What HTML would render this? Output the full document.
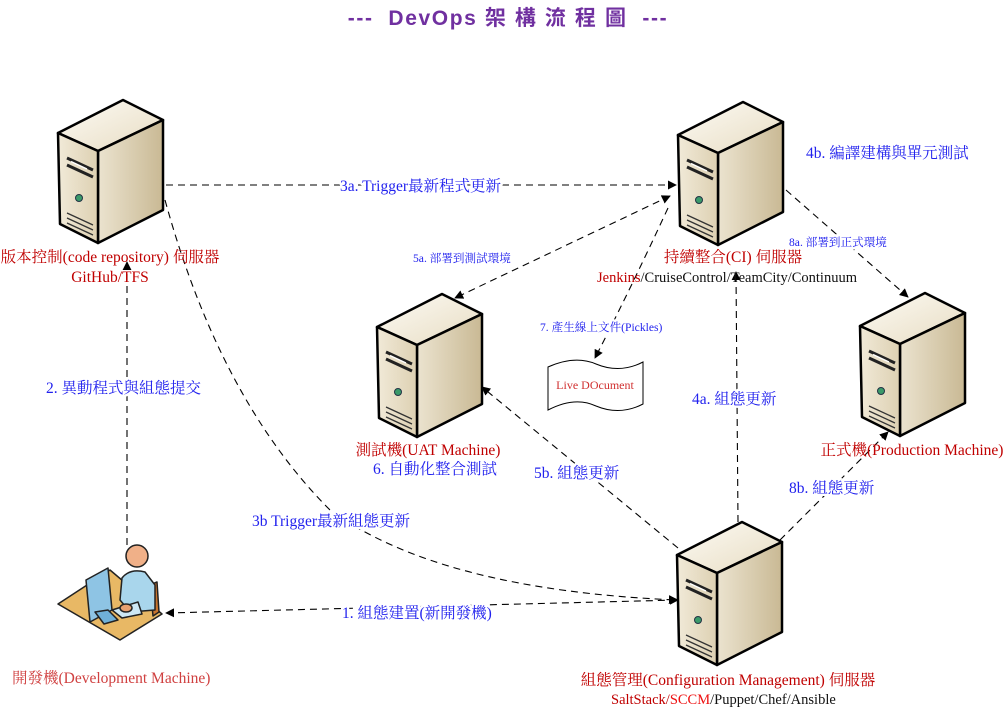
<!DOCTYPE html>
<html><head><meta charset="utf-8"><style>
html,body{margin:0;padding:0;background:#fff;width:1004px;height:709px;overflow:hidden}
svg text{font-family:"Liberation Serif","Noto Serif CJK SC","Noto Sans CJK TC",serif}
.b{fill:#2222ee;font-size:15.5px;stroke:#fff;stroke-width:5px;paint-order:stroke;stroke-linejoin:round}
.r{fill:#c00000;font-size:15.5px}
.s{font-size:11.6px}
</style></head><body>
<svg width="1004" height="709" viewBox="0 0 1004 709" xmlns="http://www.w3.org/2000/svg">
<defs>
<linearGradient id="gf" x1="0" y1="0" x2="1" y2="0"><stop offset="0" stop-color="#f1ead8"/><stop offset="1" stop-color="#ddd0b2"/></linearGradient>
<linearGradient id="gs" x1="0" y1="0" x2="1" y2="0"><stop offset="0" stop-color="#ebe3cf"/><stop offset="1" stop-color="#c9b994"/></linearGradient>
<linearGradient id="gt" x1="0" y1="0" x2="1" y2="1"><stop offset="0" stop-color="#fdfbf5"/><stop offset="1" stop-color="#e7dcc2"/></linearGradient>
<marker id="a" viewBox="0 0 10 10" refX="9" refY="5" markerWidth="9" markerHeight="9" orient="auto-start-reverse" markerUnits="userSpaceOnUse"><path d="M0,0 L10,5 L0,10 z" fill="#000"/></marker>
<g id="srv">
<path d="M1,35 L66,2 L106,22 L41,53 Z" fill="url(#gt)" stroke="#000" stroke-width="2.5" stroke-linejoin="round"/>
<path d="M41,53 L106,22 L106,112 L41,145 Z" fill="url(#gs)" stroke="#000" stroke-width="2.5" stroke-linejoin="round"/>
<path d="M1,35 L41,53 L41,145 L3,126 Z" fill="url(#gf)" stroke="#000" stroke-width="2.5" stroke-linejoin="round"/>
<path d="M10,60 L36,72 M10,67 L36,79" stroke="#222" stroke-width="3"/>
<path d="M14,63.5 L30,71" stroke="#fff" stroke-width="1.5"/>
<circle cx="22" cy="100" r="3.5" fill="#3a9a6a" stroke="#234" stroke-width="1"/>
<path d="M10,115 L36,127 M10,120 L36,132 M10,125 L36,137" stroke="#333" stroke-width="1.3"/>
</g>
</defs>

<text x="508" y="25" text-anchor="middle" style="font-family:'Liberation Sans','Noto Sans CJK TC',sans-serif;font-weight:bold;font-size:21px;letter-spacing:1.6px;fill:#7030a0" xml:space="preserve">---  DevOps 架 構 流 程 圖  ---</text>

<g fill="none" stroke="#000" stroke-width="1.1" stroke-dasharray="7,5">
<path d="M166,185 L676,185" marker-end="url(#a)"/>
<path d="M670,196 L455,298" marker-end="url(#a)" marker-start="url(#a)"/>
<path d="M668,208 Q630,290 595,358" marker-end="url(#a)"/>
<path d="M786,190 L908,297" marker-end="url(#a)"/>
<path d="M127,545 L127,262" marker-end="url(#a)"/>
<path d="M166,613 L678,600" marker-end="url(#a)" marker-start="url(#a)"/>
<path d="M165,200 Q220,400 330,510 Q440,590 677,600" marker-end="url(#a)"/>
<path d="M738,522 L736,272" marker-end="url(#a)"/>
<path d="M678,548 L482,387" marker-end="url(#a)"/>
<path d="M780,540 L888,432" marker-end="url(#a)"/>
</g>

<use href="#srv" x="57" y="98"/>
<use href="#srv" x="677" y="100"/>
<use href="#srv" x="376" y="292"/>
<use href="#srv" x="859" y="291"/>
<use href="#srv" x="676" y="520"/>

<!-- dev machine -->
<g stroke="#222" stroke-width="1.5" stroke-linejoin="round">
<path d="M58,604 L110,570 L162,614 L120,640 Z" fill="#e8b865"/>
<path d="M150,585 L157,582 L159,612 L153,616 Z" fill="#c9752e"/>
<circle cx="137" cy="556" r="11" fill="#f0b088"/>
<path d="M120,600 L122,578 Q130,568 145,572 L155,585 L155,610 L130,612 Z" fill="#a9d6ec"/>
<path d="M86,580 L108,568 L112,610 L90,622 Z" fill="#8ec4e4"/>
<path d="M95,612 L104,624 L118,620 L108,610 Z" fill="#6fb0d8"/>
<path d="M112,610 L138,602 L142,614 L122,618 Z" fill="#cde8f5"/>
<ellipse cx="126" cy="608" rx="6" ry="4" fill="#e8a070"/>
</g>

<!-- document -->
<path d="M548,367 Q575,355 596,364 Q620,374 643,362 L643,404 Q620,416 596,406 Q575,396 548,410 Z" fill="#fff" stroke="#000" stroke-width="1"/>
<text x="595" y="389" text-anchor="middle" style="font-size:12px;fill:#d03030">Live DOcument</text>

<text x="110" y="262" text-anchor="middle" class="r">版本控制(code repository) 伺服器</text>
<text x="110" y="282" text-anchor="middle" class="r">GitHub/TFS</text>
<text x="733" y="262" text-anchor="middle" class="r">持續整合(CI) 伺服器</text>
<text x="597" y="282" class="r" style="font-size:14.5px">Jenkins<tspan fill="#111">/CruiseControl/TeamCity/Continuum</tspan></text>
<text x="428" y="455" text-anchor="middle" class="r">測試機(UAT Machine)</text>
<text x="435" y="474" text-anchor="middle" class="b">6. 自動化整合測試</text>
<text x="912" y="455" text-anchor="middle" class="r">正式機(Production Machine)</text>
<text x="728" y="685" text-anchor="middle" class="r">組態管理(Configuration Management) 伺服器</text>
<text x="611" y="704" class="r" style="font-size:14.5px">SaltStack/<tspan fill="#ee1111">SCCM</tspan><tspan fill="#111">/Puppet/Chef/Ansible</tspan></text>
<text x="12" y="683" class="r" style="fill:#d04040">開發機(Development Machine)</text>

<text x="340" y="191" class="b">3a. Trigger最新程式更新</text>
<text x="806" y="158" class="b">4b. 編譯建構與單元測試</text>
<text x="413" y="262" class="b s">5a. 部署到測試環境</text>
<text x="789" y="246" class="b s">8a. 部署到正式環境</text>
<text x="540" y="331" class="b s">7. 產生線上文件(Pickles)</text>
<text x="46" y="393" class="b">2. 異動程式與組態提交</text>
<text x="692" y="404" class="b">4a. 組態更新</text>
<text x="534" y="478" class="b">5b. 組態更新</text>
<text x="789" y="493" class="b">8b. 組態更新</text>
<text x="252" y="526" class="b">3b Trigger最新組態更新</text>
<text x="342" y="618" class="b">1. 組態建置(新開發機)</text>
</svg>
</body></html>
